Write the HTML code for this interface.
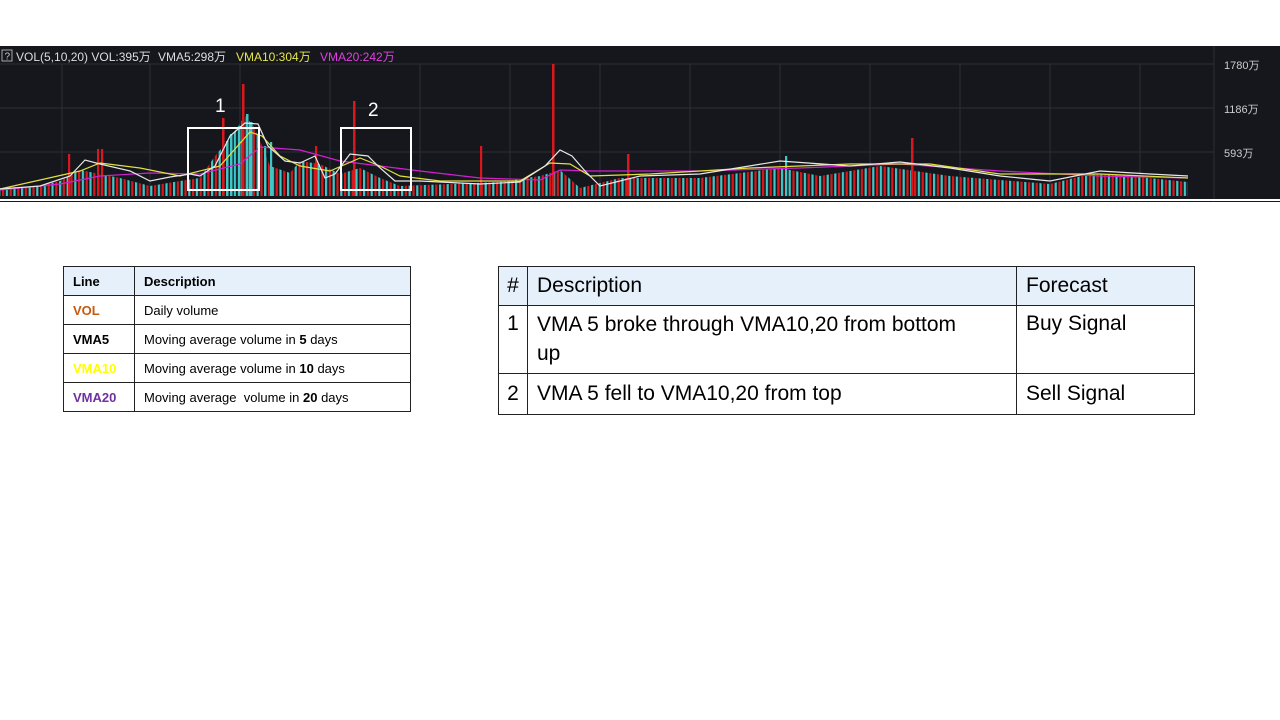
<!DOCTYPE html>
<html><head><meta charset="utf-8"><style>
body{margin:0;width:1280px;height:720px;background:#fff;position:relative;overflow:hidden;font-family:"Liberation Sans","Noto Sans CJK SC",sans-serif}
#chart{position:absolute;left:0;top:46px;width:1280px;height:156px;background:#15171c}
table{border-collapse:collapse;position:absolute}
#t1{left:63px;top:266px;width:348px;font-size:13px}
#t1 td{border:1px solid #222;padding:0 9px;height:29px;box-sizing:border-box}
#t1 tr:first-child td{background:#e6f0fb;font-weight:bold;height:29px}
#t2{left:498px;top:266px;width:697px;font-size:21px;table-layout:fixed}
#t2 td{border:1px solid #222;padding:0 9px;vertical-align:middle;box-sizing:border-box}
#t2 tr:first-child td{background:#e6f0fb;height:39px}
</style></head><body>
<div id="chart"><svg width="1280" height="156" xmlns="http://www.w3.org/2000/svg">
<defs>
<pattern id="pb" x="2" y="0" width="7.6" height="156" patternUnits="userSpaceOnUse">
<rect x="0" y="0" width="2.2" height="156" fill="#d8181c"/>
<rect x="3.8" y="0" width="2.2" height="156" fill="#3fc6c6"/>
</pattern>
</defs>
<g stroke="#2c2f36" stroke-width="1">
<line x1="0" y1="18" x2="1214" y2="18"/><line x1="0" y1="62" x2="1214" y2="62"/><line x1="0" y1="106" x2="1214" y2="106"/>
<line x1="62" y1="18" x2="62" y2="150"/><line x1="150" y1="18" x2="150" y2="150"/><line x1="240" y1="18" x2="240" y2="150"/><line x1="330" y1="18" x2="330" y2="150"/><line x1="420" y1="18" x2="420" y2="150"/><line x1="510" y1="18" x2="510" y2="150"/><line x1="600" y1="18" x2="600" y2="150"/><line x1="690" y1="18" x2="690" y2="150"/><line x1="780" y1="18" x2="780" y2="150"/><line x1="870" y1="18" x2="870" y2="150"/><line x1="960" y1="18" x2="960" y2="150"/><line x1="1050" y1="18" x2="1050" y2="150"/><line x1="1140" y1="18" x2="1140" y2="150"/>
<line x1="1214" y1="0" x2="1214" y2="156"/>
</g>
<polygon fill="url(#pb)" points="0,150 0,142 40,140 60,135 80,124 100,128 120,132 150,140 180,135 200,132 215,110 230,92 245,70 255,82 270,120 290,127 300,115 320,118 340,128 360,122 380,132 400,140 500,136 540,130 560,124 580,142 620,132 700,132 780,122 820,130 880,120 950,130 1000,134 1050,138 1090,128 1130,130 1188,136 1188,150"/>
<g fill="#d8181c">
<rect x="242" y="38" width="2.5" height="112"/><rect x="222" y="72" width="2.5" height="78"/><rect x="353" y="55" width="2.5" height="95"/><rect x="552" y="18" width="2.5" height="132"/><rect x="627" y="108" width="2.5" height="42"/><rect x="911" y="92" width="2.5" height="58"/>
<rect x="97" y="103" width="2.2" height="47"/><rect x="101" y="103" width="2.2" height="47"/><rect x="68" y="108" width="2.2" height="42"/><rect x="480" y="100" width="2.2" height="50"/><rect x="315" y="100" width="2.2" height="50"/>
</g>
<g fill="#3fc6c6">
<rect x="246" y="68" width="2.5" height="82"/><rect x="238" y="80" width="2.5" height="70"/><rect x="230" y="88" width="2.5" height="62"/><rect x="226" y="95" width="2.5" height="55"/><rect x="250" y="76" width="2.5" height="74"/><rect x="785" y="110" width="2.2" height="40"/><rect x="270" y="96" width="2.2" height="54"/><rect x="264" y="100" width="2.2" height="50"/>
</g>
<g fill="none" stroke-width="1.2">
<polyline stroke="#d020d0" points="0,144 60,138 100,130 150,127 200,128 240,118 260,101 300,104 340,115 380,120 420,125 480,132 540,134 560,124 590,125 700,125 800,122 900,118 1000,125 1100,130 1188,132"/>
<polyline stroke="#e0e040" points="0,143 80,125 100,117 140,122 180,130 220,120 250,86 262,90 280,110 300,120 330,125 360,112 380,120 400,130 440,135 520,135 550,117 570,118 590,130 650,128 750,122 850,118 930,118 1000,128 1100,128 1188,132"/>
<polyline stroke="#e8e8e8" points="0,143 40,140 70,130 85,114 100,118 130,125 150,135 170,131 190,128 200,130 215,120 230,90 245,77 258,78 268,100 285,115 300,117 315,110 325,132 335,128 350,108 368,110 378,120 395,135 420,135 480,138 520,136 545,120 560,104 572,110 585,125 600,140 640,130 700,128 780,115 850,120 900,116 950,122 1000,130 1050,135 1100,125 1150,128 1188,130"/>
</g>
<rect x="188" y="82" width="71" height="62" fill="none" stroke="#fff" stroke-width="2"/>
<rect x="341" y="82" width="70" height="62" fill="none" stroke="#fff" stroke-width="2"/>
<text x="215" y="66" fill="#fff" font-size="19" font-family="Liberation Sans">1</text>
<text x="368" y="70" fill="#fff" font-size="19" font-family="Liberation Sans">2</text>
<text x="1224" y="23" fill="#ccc" font-size="11">1780万</text>
<text x="1224" y="67" fill="#ccc" font-size="11">1186万</text>
<text x="1224" y="111" fill="#ccc" font-size="11">593万</text>
<rect x="2" y="4" width="10" height="11" fill="none" stroke="#aaa"/>
<text x="4.5" y="13.5" fill="#ccc" font-size="10">?</text>
<text x="16" y="15" font-size="12"><tspan fill="#ddd">VOL(5,10,20) VOL:395万</tspan><tspan fill="#ddd" x="158">VMA5:298万</tspan><tspan fill="#e6e64a" x="236">VMA10:304万</tspan><tspan fill="#e040e0" x="320">VMA20:242万</tspan></text>
<line x1="0" y1="154" x2="1280" y2="154" stroke="#fff" stroke-width="2"/>
</svg></div>
<table id="t1">
<tr><td style="width:71px">Line</td><td>Description</td></tr>
<tr><td style="color:#c55a11;font-weight:bold">VOL</td><td>Daily volume</td></tr>
<tr><td style="font-weight:bold">VMA5</td><td>Moving average volume in <b>5</b> days</td></tr>
<tr><td style="color:#ffff00;font-weight:bold">VMA10</td><td>Moving average volume in <b>10</b> days</td></tr>
<tr><td style="color:#7030a0;font-weight:bold">VMA20</td><td>Moving average &nbsp;volume in <b>20</b> days</td></tr>
</table>
<table id="t2">
<colgroup><col style="width:29px"><col style="width:489px"><col></colgroup>
<tr><td style="text-align:center;padding:0">#</td><td>Description</td><td>Forecast</td></tr>
<tr><td style="text-align:center;padding:0;height:68px;vertical-align:top;padding-top:6px">1</td><td style="line-height:29px;vertical-align:top;padding-top:4px">VMA 5 broke through VMA10,20 from bottom<br>up</td><td style="vertical-align:top;padding-top:6px">Buy Signal</td></tr>
<tr><td style="text-align:center;padding:0;height:41px">2</td><td>VMA 5 fell to VMA10,20 from top</td><td>Sell Signal</td></tr>
</table>
</body></html>
